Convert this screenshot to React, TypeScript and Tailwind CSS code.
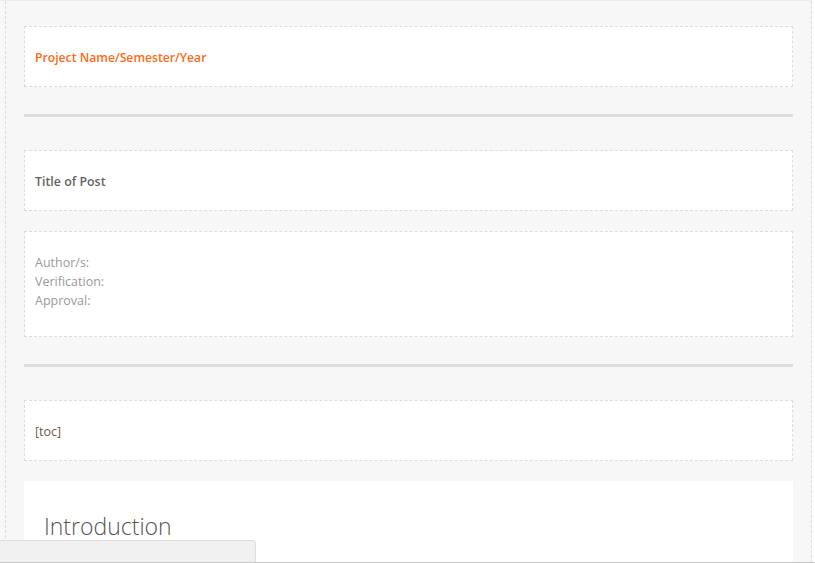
const font = { fontFamily: '"Open Sans", "Liberation Sans", sans-serif' };

function Box({ children, className = '' }: { children: React.ReactNode; className?: string }) {
  return (
    <div className={`border border-dashed border-[#dcdcdc] bg-white px-[10px] ${className}`}>
      {children}
    </div>
  );
}

function Divider() {
  return <div className="h-[3px] bg-[#dddddd]" />;
}

export default function App() {
  return (
    <div className="relative h-[563px] w-[815px] overflow-hidden bg-white" style={font}>
      <div className="h-full w-[812px] border-t border-[#ececec] bg-[#f7f7f7] pl-[5px]">
        <div className="h-full border-x border-dashed border-[#dcdcdc] pl-[18px] pr-[18px] pt-[25px]">
          <Box className="pt-[21px] pb-[19px]">
            <p className="text-[12.2px] leading-[19px] font-semibold text-[#ff6a14]">
              Project Name/Semester/Year
            </p>
          </Box>

          <div className="mt-[27px] mb-[33px]">
            <Divider />
          </div>

          <Box className="pt-[21px] pb-[19px]">
            <p className="text-[12.4px] leading-[19px] font-semibold text-[#636363]">Title of Post</p>
          </Box>

          <Box className="mt-[20px] pt-[21px] pb-[26px]">
            <div className="text-[12.5px] leading-[19px] text-[#9a9a9a]">
              <p>Author/s:</p>
              <p>Verification:</p>
              <p>Approval:</p>
            </div>
          </Box>

          <div className="mt-[27px] mb-[33px]">
            <Divider />
          </div>

          <Box className="pt-[21px] pb-[19px]">
            <p className="text-[12.5px] leading-[19px] text-[#6e5846]">[toc]</p>
          </Box>

          <div className="mt-[20px] bg-white px-[20px] pt-[29px] pb-[40px]">
            <h2 className="text-[23px] leading-[32px] font-light text-[#555555]">Introduction</h2>
          </div>
        </div>
      </div>

      {/* bottom status tab */}
      <div className="absolute bottom-0 left-0 right-0 h-[23px] border-b border-[#c8c8c8]">
        <div className="h-full w-[256px] rounded-tr-[4px] border-t border-r border-[#dddddd] bg-[#f0f0f0]" />
      </div>
    </div>
  );
}
